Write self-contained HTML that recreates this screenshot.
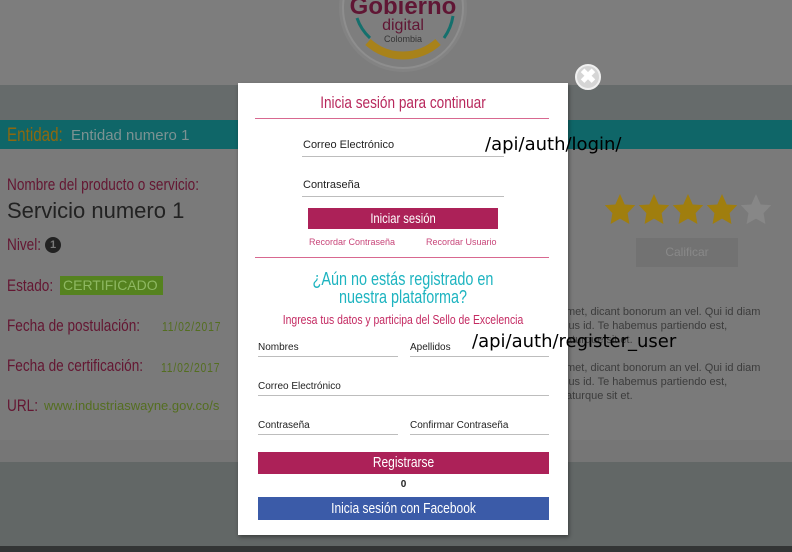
<!DOCTYPE html>
<html><head><meta charset="utf-8"><style>
*{margin:0;padding:0;box-sizing:border-box}
body{width:792px;height:552px;overflow:hidden;position:relative;background:#7a7a7a;font-family:"Liberation Sans",sans-serif}
.a{position:absolute;white-space:nowrap;line-height:1}
.n{transform:scaleX(.8);transform-origin:0 0}
.c{transform:scaleX(.8);transform-origin:50% 0}
.ul{position:absolute;height:1px;background:#bdbdbd}
</style></head><body>
<div class="a" style="left:0;top:0;width:792px;height:85px;background:#7d7d7d"></div>
<div class="a" style="left:0;top:85px;width:792px;height:35px;background:#666b6b"></div>
<div class="a" style="left:0;top:120px;width:792px;height:29px;background:#0f6668"></div>
<div class="a" style="left:0;top:149px;width:792px;height:313px;background:#7a7a7a"></div>
<div class="a" style="left:0;top:440px;width:792px;height:22px;background:#767676"></div>
<div class="a" style="left:0;top:462px;width:792px;height:84px;background:#626766"></div>
<div class="a" style="left:0;top:546px;width:792px;height:6px;background:#333535"></div>

<svg class="a" style="left:330px;top:0" width="146" height="80" viewBox="0 0 146 80">
<circle cx="73" cy="8" r="64" fill="#838383"/>
<circle cx="73" cy="8" r="60" fill="#7e7e7e" stroke="#8e8e8e" stroke-width="2"/>
<path d="M27 18 A48 48 0 0 0 40 38" stroke="#15706d" stroke-width="3" fill="none"/>
<path d="M123 16 A52 52 0 0 1 114 38" stroke="#15706d" stroke-width="3" fill="none"/>
<path d="M38 42 A52 52 0 0 0 108 42" stroke="#a8821a" stroke-width="8" fill="none"/>
<text x="73" y="14" text-anchor="middle" font-family="Liberation Sans" font-weight="bold" font-size="24" fill="#601634">Gobierno</text>
<text x="73" y="30" text-anchor="middle" font-family="Liberation Sans" font-size="16" fill="#601634">digital</text>
<text x="73" y="42" text-anchor="middle" font-family="Liberation Sans" font-size="9" fill="#353535">Colombia</text>
</svg>

<div class="a n" style="left:7px;top:126px;font-size:19px;color:#8c6810">Entidad:</div>
<div class="a" style="left:71px;top:128px;font-size:15px;color:#7c9292">Entidad numero 1</div>
<div class="a n" style="left:7px;top:176px;font-size:17px;color:#641632">Nombre del producto o servicio:</div>
<div class="a" style="left:7px;top:200px;font-size:22px;color:#222">Servicio numero 1</div>
<div class="a n" style="left:7px;top:236px;font-size:17px;color:#641632">Nivel:</div>
<div class="a" style="left:45px;top:237px;width:16px;height:16px;border-radius:50%;background:#222;color:#7a7a7a;font-size:11px;text-align:center;line-height:16px;font-weight:bold">1</div>
<div class="a n" style="left:7px;top:277px;font-size:17px;color:#641632">Estado:</div>
<div class="a" style="left:60px;top:276px;width:103px;height:19px;background:#55821f;color:#8eb862;font-size:14px;line-height:19px;padding-left:3px">CERTIFICADO</div>
<div class="a n" style="left:7px;top:317px;font-size:17px;color:#641632">Fecha de postulación:</div>
<div class="a n" style="left:162px;top:320px;font-size:13px;color:#546e20;letter-spacing:1px">11/02/2017</div>
<div class="a n" style="left:7px;top:357px;font-size:17px;color:#641632">Fecha de certificación:</div>
<div class="a n" style="left:161px;top:361px;font-size:13px;color:#546e20;letter-spacing:1px">11/02/2017</div>
<div class="a n" style="left:7px;top:397px;font-size:17px;color:#641632">URL:</div>
<div class="a" style="left:44px;top:399px;font-size:13px;color:#546e20">www.industriaswayne.gov.co/s</div>

<svg class="a" style="left:600px;top:192px" width="175" height="36" viewBox="0 0 175 36">
<defs><path id="s" d="M0,-16 L4.7,-5.5 L15.2,-4.9 L7.6,3.1 L9.4,14 L0,8.6 L-9.4,14 L-7.6,3.1 L-15.2,-4.9 L-4.7,-5.5Z"/></defs>
<use href="#s" x="20" y="18" fill="#a07e0e"/>
<use href="#s" x="54" y="18" fill="#a07e0e"/>
<use href="#s" x="88" y="18" fill="#a07e0e"/>
<use href="#s" x="122" y="18" fill="#a07e0e"/>
<use href="#s" x="156" y="18" fill="#878787"/>
</svg>
<div class="a" style="left:636px;top:238px;width:102px;height:29px;background:#727272;color:#898989;font-size:12px;text-align:center;line-height:29px">Calificar</div>
<div class="a" style="left:566px;top:305px;font-size:11px;color:#3c3c3c;line-height:14px">met, dicant bonorum an vel. Qui id diam<br>ius id. Te habemus partiendo est,<br>aturque sit et.</div>
<div class="a" style="left:566px;top:361px;font-size:11px;color:#3c3c3c;line-height:14px">met, dicant bonorum an vel. Qui id diam<br>ius id. Te habemus partiendo est,<br>aturque sit et.</div>

<div class="a" style="left:238px;top:83px;width:330px;height:452px;background:#fff;box-shadow:1px 2px 4px rgba(0,0,0,.4)"></div>
<div class="a" style="left:575px;top:64px;width:26px;height:26px;border-radius:50%;background:#d5d5d5;border:2px solid #f0f0f0;color:#fff;font-size:20px;font-weight:bold;text-align:center;line-height:22px">✖</div>
<div class="a c" style="left:238px;width:330px;text-align:center;top:94px;font-size:17px;color:#b8285c">Inicia sesión para continuar</div>
<div class="ul" style="left:255px;top:118px;width:294px;background:#d86890"></div>
<div class="a" style="left:303px;top:140px;font-size:11px;color:#222">Correo Electrónico</div>
<div class="ul" style="left:302px;top:156px;width:202px"></div>
<div class="a" style="left:303px;top:180px;font-size:11px;color:#222">Contraseña</div>
<div class="ul" style="left:302px;top:196px;width:202px"></div>
<div class="a" style="left:308px;top:208px;width:190px;height:21px;background:#ac2158"></div>
<div class="a c" style="left:308px;top:208px;width:190px;height:21px;color:#fff;font-size:14px;text-align:center;line-height:21px">Iniciar sesión</div>
<div class="a" style="left:309px;top:238px;font-size:9px;color:#c8467a">Recordar Contraseña</div>
<div class="a" style="left:426px;top:238px;font-size:9px;color:#c8467a">Recordar Usuario</div>
<div class="ul" style="left:255px;top:257px;width:294px;background:#d86890"></div>
<div class="a c" style="left:238px;width:330px;text-align:center;top:270px;font-size:18px;color:#1eb4c0;line-height:18px">¿Aún no estás registrado en<br>nuestra plataforma?</div>
<div class="a c" style="left:238px;width:330px;text-align:center;top:313px;font-size:13px;color:#c42a62">Ingresa tus datos y participa del Sello de Excelencia</div>
<div class="a" style="left:258px;top:343px;font-size:10px;color:#222">Nombres</div>
<div class="ul" style="left:258px;top:356px;width:140px"></div>
<div class="a" style="left:410px;top:343px;font-size:10px;color:#222">Apellidos</div>
<div class="ul" style="left:410px;top:356px;width:139px"></div>
<div class="a" style="left:258px;top:382px;font-size:10px;color:#222">Correo Electrónico</div>
<div class="ul" style="left:258px;top:395px;width:291px"></div>
<div class="a" style="left:258px;top:421px;font-size:10px;color:#222">Contraseña</div>
<div class="ul" style="left:258px;top:434px;width:140px"></div>
<div class="a" style="left:410px;top:421px;font-size:10px;color:#222">Confirmar Contraseña</div>
<div class="ul" style="left:410px;top:434px;width:139px"></div>
<div class="a" style="left:258px;top:452px;width:291px;height:22px;background:#ac2158"></div>
<div class="a c" style="left:258px;top:452px;width:291px;height:22px;color:#fff;font-size:15px;text-align:center;line-height:22px">Registrarse</div>
<div class="a" style="left:258px;width:291px;text-align:center;top:480px;font-size:10px;font-weight:bold;color:#222">0</div>
<div class="a" style="left:258px;top:497px;width:291px;height:23px;background:#3b5ba8"></div>
<div class="a c" style="left:258px;top:497px;width:291px;height:23px;color:#fff;font-size:15px;text-align:center;line-height:23px">Inicia sesión con Facebook</div>

<div class="a" style="left:485px;top:136px;font-size:18px;color:#000;font-family:'DejaVu Sans',sans-serif">/api/auth/login/</div>
<div class="a" style="left:472px;top:333px;font-size:18px;color:#000;font-family:'DejaVu Sans',sans-serif">/api/auth/register_user</div>
</body></html>
